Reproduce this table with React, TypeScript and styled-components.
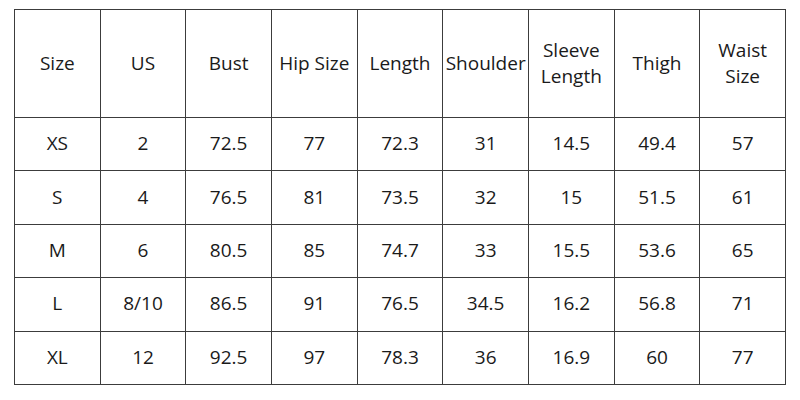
import React from "react";
import styled, { createGlobalStyle } from "styled-components";

const Global = createGlobalStyle`
  html, body { margin: 0; padding: 0; background: #ffffff; }
  body { font-family: "Open Sans", "Liberation Sans", sans-serif; }
`;

const Page = styled.div`
  width: 800px;
  height: 400px;
  padding: 9px 0 0 14px;
  box-sizing: border-box;
  background: #fff;
`;

const Grid = styled.div`
  display: grid;
  grid-template-columns: repeat(9, 1fr);
  grid-template-rows: 107px repeat(5, 1fr);
  gap: 1px;
  padding: 1px;
  width: 772px;
  height: 376px;
  box-sizing: border-box;
  background: #3c3c3c;
`;

const Cell = styled.div`
  background: #fff;
  display: flex;
  align-items: center;
  justify-content: center;
  text-align: center;
  font-size: 19px;
  line-height: 26px;
  color: #1a1a1a;
  white-space: nowrap;
  padding-bottom: 2px;
  box-sizing: border-box;
`;

const headers = [
  "Size",
  "US",
  "Bust",
  "Hip Size",
  "Length",
  "Shoulder",
  "Sleeve\nLength",
  "Thigh",
  "Waist\nSize",
];

const rows = [
  ["XS", "2", "72.5", "77", "72.3", "31", "14.5", "49.4", "57"],
  ["S", "4", "76.5", "81", "73.5", "32", "15", "51.5", "61"],
  ["M", "6", "80.5", "85", "74.7", "33", "15.5", "53.6", "65"],
  ["L", "8/10", "86.5", "91", "76.5", "34.5", "16.2", "56.8", "71"],
  ["XL", "12", "92.5", "97", "78.3", "36", "16.9", "60", "77"],
];

export default function App() {
  return (
    <>
      <Global />
      <Page>
        <Grid>
          {headers.map((h) => (
            <Cell key={h}>
              <span>
                {h.split("\n").map((l, i) => (
                  <React.Fragment key={i}>
                    {i > 0 && <br />}
                    {l}
                  </React.Fragment>
                ))}
              </span>
            </Cell>
          ))}
          {rows.map((r, ri) =>
            r.map((v, ci) => <Cell key={`${ri}-${ci}`}>{v}</Cell>)
          )}
        </Grid>
      </Page>
    </>
  );
}
